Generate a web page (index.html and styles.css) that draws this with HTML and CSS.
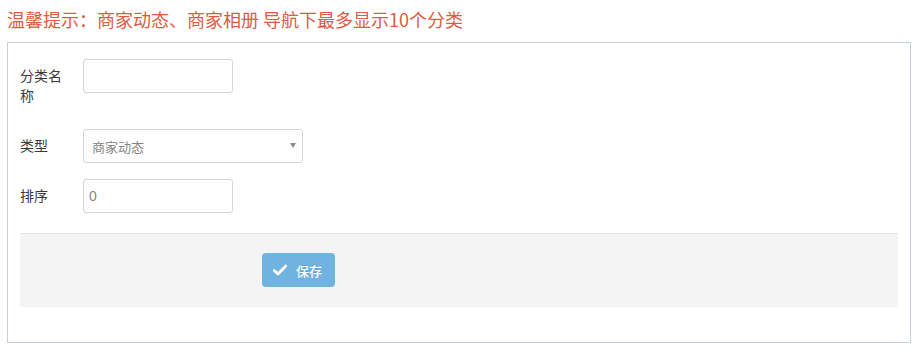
FILE: index.html
```html
<!DOCTYPE html>
<html lang="zh-CN">
<head>
<meta charset="utf-8">
<title>分类编辑</title>
<link rel="stylesheet" href="styles.css">
</head>
<body>
<div class="page">
  <div class="tip">温馨提示：商家动态、商家相册 导航下最多显示10个分类</div>
  <div class="panel">
    <form class="form">
      <div class="row">
        <label class="label">分类名称</label>
        <input class="input" type="text" value="">
      </div>
      <div class="row">
        <label class="label">类型</label>
        <div class="select-wrap">
          <select class="select">
            <option>商家动态</option>
            <option>商家相册</option>
          </select>
          <span class="arrow"></span>
        </div>
      </div>
      <div class="row">
        <label class="label">排序</label>
        <input class="input" type="text" value="0">
      </div>
      <div class="actions">
        <button type="button" class="btn">
          <svg class="check" viewBox="0 0 14 12" width="14" height="12" aria-hidden="true">
            <path d="M1.2 6.4 L5 10 L12.8 2" fill="none" stroke="#fff" stroke-width="2.8" stroke-linecap="round" stroke-linejoin="round"/>
          </svg>
          <span>保存</span>
        </button>
      </div>
    </form>
  </div>
</div>
</body>
</html>
```

FILE: styles.css
```css
html, body {
  margin: 0;
  padding: 0;
  background: #fff;
}
body {
  font-family: "Noto Sans CJK SC", "Liberation Sans", "Open Sans", sans-serif;
  color: #393939;
}
.page {
  padding: 7px 9px 0 7px;
  width: 904px;
}
.tip {
  font-size: 18px;
  line-height: 24px;
  color: #dd5a43;
  margin-bottom: 11px;
  letter-spacing: 0;
}
.panel {
  border: 1px solid #c5d0dc;
  padding: 16px 12px 35px 12px;
  width: 878px;
}
.row {
  display: flex;
  align-items: flex-start;
  margin-bottom: 16px;
}
.label {
  width: 48px;
  margin-right: 15px;
  font-size: 14px;
  line-height: 20px;
  padding: 6px 0 8px 0;
  color: #393939;
}
.input {
  box-sizing: border-box;
  width: 150px;
  height: 34px;
  border: 1px solid #d5d5d5;
  border-radius: 3px;
  padding: 0 5px;
  font-family: "Liberation Sans", "Noto Sans CJK SC", sans-serif;
  font-size: 14px;
  color: #858585;
  background: #fff;
  outline: none;
}
.select-wrap {
  position: relative;
  width: 220px;
  height: 34px;
}
.select {
  -webkit-appearance: none;
  appearance: none;
  box-sizing: border-box;
  width: 220px;
  height: 34px;
  border: 1px solid #d5d5d5;
  border-radius: 3px;
  padding: 0 8px;
  font-family: "Noto Sans CJK SC", sans-serif;
  font-size: 13px;
  color: #858585;
  background: #fff;
  outline: none;
}
.arrow {
  position: absolute;
  right: 7px;
  top: 14px;
  width: 0;
  height: 0;
  border-left: 3.5px solid transparent;
  border-right: 3.5px solid transparent;
  border-top: 5px solid #8a8a8a;
  pointer-events: none;
}
.actions {
  margin-top: 20px;
  background: #f4f4f4;
  border-top: 1px solid #e5e5e5;
  padding: 19px 20px 20px 242px;
}
.btn {
  display: flex;
  align-items: center;
  box-sizing: border-box;
  width: 73px;
  height: 34px;
  padding: 0 0 0 11px;
  border: none;
  border-radius: 4px;
  background: #6fb3e0;
  color: #fff;
  font-family: "Noto Sans CJK SC", sans-serif;
  font-size: 13px;
  font-weight: 500;
  text-shadow: 0 -1px 0 rgba(0,0,0,0.1);
  cursor: pointer;
}
.check {
  margin-right: 9px;
  flex: none;
}
```
